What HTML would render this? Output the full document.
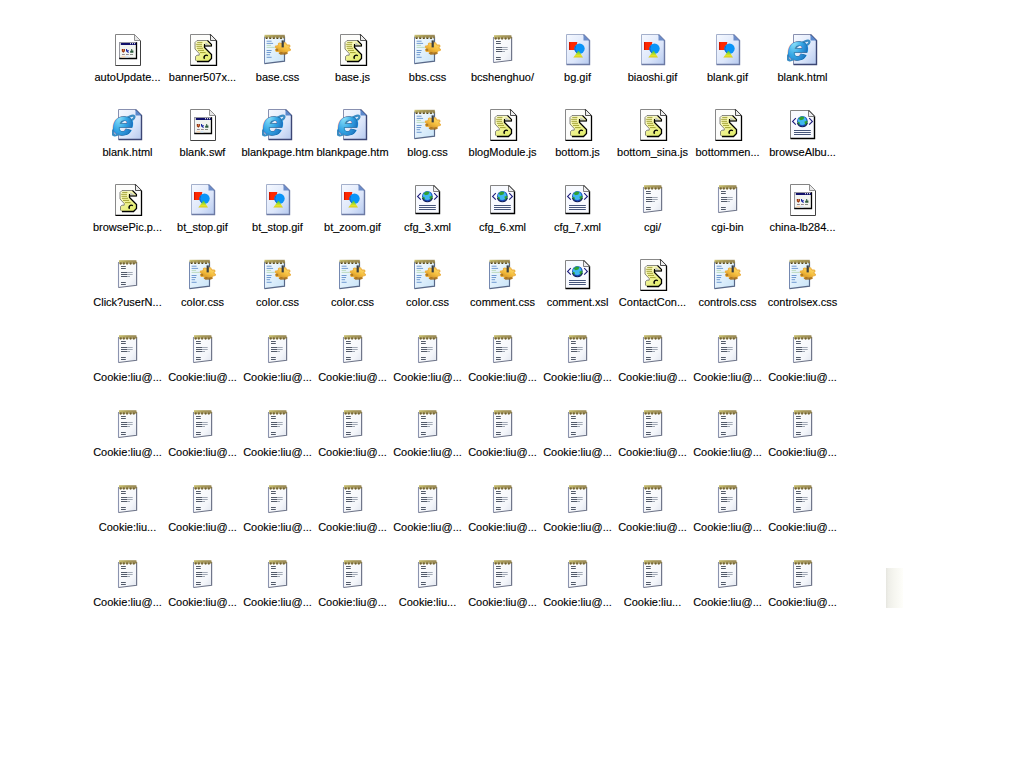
<!DOCTYPE html>
<html><head><meta charset="utf-8"><style>
html,body{margin:0;padding:0;background:#fff;width:1024px;height:768px;overflow:hidden;position:relative}
.i{position:absolute;width:32px;height:32px;overflow:visible}
.t{position:absolute;width:75px;text-align:center;font:11px/13px "Liberation Sans",sans-serif;color:#000;white-space:nowrap;-webkit-text-stroke:0.12px #000}
.sel{position:absolute;left:886px;top:568px;width:17px;height:40px;background:linear-gradient(to right,#e6e6e0,#efefe9 15%,#f6f6f0 50%,#fefefa)}
</style></head><body>
<svg width="0" height="0" style="position:absolute"><defs>
<linearGradient id="gBlue" x1="0" y1="0" x2="1" y2="1"><stop offset="0" stop-color="#f6f9ff"/><stop offset="0.6" stop-color="#dce6fa"/><stop offset="1" stop-color="#b4c8ee"/></linearGradient>
<linearGradient id="gNote" x1="0" y1="0" x2="1" y2="1"><stop offset="0" stop-color="#ffffff"/><stop offset="0.7" stop-color="#f4f6fa"/><stop offset="1" stop-color="#dfe4ee"/></linearGradient>
<linearGradient id="gCss" x1="0" y1="0" x2="1" y2="1"><stop offset="0" stop-color="#f8fcff"/><stop offset="1" stop-color="#c8e4f8"/></linearGradient>
<radialGradient id="gE" cx="0.3" cy="0.3" r="0.8"><stop offset="0" stop-color="#9aeafc"/><stop offset="0.5" stop-color="#36a8e6"/><stop offset="1" stop-color="#1666b8"/></radialGradient>
<linearGradient id="gGear" x1="0.8" y1="0" x2="0.2" y2="1"><stop offset="0" stop-color="#ffe070"/><stop offset="0.5" stop-color="#f4bc3c"/><stop offset="1" stop-color="#c88a24"/></linearGradient>
<linearGradient id="gTri" x1="0" y1="0" x2="0" y2="1"><stop offset="0" stop-color="#30c83c"/><stop offset="0.7" stop-color="#e4e428"/><stop offset="1" stop-color="#d8c820"/></linearGradient>
<linearGradient id="gScroll" x1="0" y1="0" x2="0.6" y2="1"><stop offset="0" stop-color="#fdfde0"/><stop offset="0.5" stop-color="#f4f4a0"/><stop offset="1" stop-color="#e4ee70"/></linearGradient>
<linearGradient id="gBind2" x1="0" y1="0" x2="1" y2="0"><stop offset="0" stop-color="#c8c070"/><stop offset="0.5" stop-color="#a89a58"/><stop offset="1" stop-color="#9c8c5c"/></linearGradient>
<linearGradient id="gBind" x1="0" y1="0" x2="0" y2="1"><stop offset="0" stop-color="#8a7840"/><stop offset="0.5" stop-color="#c8b468"/><stop offset="1" stop-color="#e8dcb0"/></linearGradient>

<symbol id="app" viewBox="0 0 32 32">
 <path d="M3.5,0.5H22.5L28.5,6.5V31.5H3.5Z" fill="#fff"/>
 <path d="M3.5,31.5V0.5H22.5" fill="none" stroke="#848484"/>
 <path d="M22.5,0.5L28.5,6.5V31.5H3.5" fill="none" stroke="#404040"/>
 <path d="M22.5,0.5V6.5H28.5Z" fill="#e8e8e8" stroke="#909090"/>
 <rect x="7.5" y="8.5" width="17" height="16" fill="#f2f4f0" stroke="#9898a0"/>
 <path d="M24.5,8.3V24.5H7.3" fill="none" stroke="#000" stroke-width="1.3"/>
 <rect x="8.8" y="9" width="15.4" height="2" fill="#10106a"/>
 <rect x="18" y="9.2" width="1" height="1" fill="#fff"/><rect x="20" y="9.2" width="1" height="1" fill="#fff"/><rect x="22" y="9.2" width="1" height="1" fill="#fff"/>
 <rect x="9.5" y="22" width="4" height="1.5" fill="#fcd8b4"/><rect x="13.5" y="22" width="3" height="1.5" fill="#d4e6f8"/>
 <path d="M9.8,15.1h1.3l0.5,0.6l0.5,-0.6h0.8v2.1l-1.6,1.6l-1.5,-1.6z" fill="#922c0e"/>
 <circle cx="11.3" cy="16.6" r="0.6" fill="#f0a040"/>
 <path d="M14,15h1.1v1.2h1.8v1h-1l1.2,1.5h-1.3l-1.3,-1.3h-0.5z" fill="#1a28a0"/>
 <path d="M19.2,15h1v1.5h1.2v2.3h-3.2v-2.1h1z" fill="#2c5a3c"/>
 <rect x="10" y="20" width="2.8" height="0.9" fill="#8a7a80"/><rect x="14" y="20" width="2.8" height="0.9" fill="#8a7a80"/><rect x="18" y="20" width="3" height="0.9" fill="#7a8078"/>
</symbol>

<symbol id="js" viewBox="0 0 32 32">
 <path d="M3.5,0.5H23L29.5,7V31.5H3.5Z" fill="#fdfdfb"/>
 <path d="M3.5,31.5V0.5H23" fill="none" stroke="#888"/>
 <path d="M23,0.5L29.5,7V31.5H3.5" fill="none" stroke="#000" stroke-width="1.3"/>
 <path d="M23.5,0.5V6.5H29.5Z" fill="#ececec" stroke="#404040" stroke-width="0.9"/>
 <path d="M10,6.5H20.5L24.5,10.5V12H17.5V13.5L24.5,20.5V24.5L21.5,27.5H10L8.5,26V22.5L10,21.2H12.2V19.5L8,15V8.5Z" fill="url(#gScroll)" stroke="#585858" stroke-width="0.7"/>
 <path d="M18.3,8.2L23.2,11.2H18.3Z" fill="#c4c8c4"/>
 <path d="M17.5,11.5V13.5L24.5,20.5V24.5L21.5,27.5H10" fill="none" stroke="#000" stroke-width="1.3"/>
 <path d="M20.5,6.5L24.5,10.5V12H17.5V10" fill="none" stroke="#000" stroke-width="1.1"/>
 <path d="M17.6,24.8a2.2,2.2 0 0 1 3.2,-3" fill="none" stroke="#000" stroke-width="1.4"/>
 <g stroke="#9a9a28" stroke-width="0.9">
  <path d="M10.2,8.4h5.2M9.2,10.3h5.8M9.5,12.3h5.5M10,14.3h6M11,16.4h6M13,18.6h5.6"/>
 </g>
</symbol>

<symbol id="css" viewBox="0 0 32 32">
 <path d="M2.5,2.5H22.5V27.2L2.5,29.6Z" fill="url(#gCss)"/>
 <path d="M2.5,29.6V2.5" fill="none" stroke="#7488b0" stroke-width="1"/>
 <path d="M22.5,2.5V27.2L2.5,29.6" fill="none" stroke="#586888" stroke-width="1.2"/>
 <path d="M2.5,0.8H22.8V3.4H2.5Z" fill="url(#gBind2)"/>
 <g fill="#8c7c44"><ellipse cx="4.6" cy="3.8" rx="1.4" ry="1.3"/><ellipse cx="8.2" cy="3.8" rx="1.4" ry="1.3"/><ellipse cx="11.8" cy="3.8" rx="1.4" ry="1.3"/><ellipse cx="15.4" cy="3.8" rx="1.4" ry="1.3"/><ellipse cx="19" cy="3.8" rx="1.4" ry="1.3"/><ellipse cx="22" cy="3.4" rx="0.9" ry="1.2"/></g>
 <g fill="#4c4020"><rect x="4" y="4" width="1.2" height="1"/><rect x="7.6" y="4" width="1.2" height="1"/><rect x="11.2" y="4" width="1.2" height="1"/><rect x="14.8" y="4" width="1.2" height="1"/><rect x="18.4" y="4" width="1.2" height="1"/></g>
 <g stroke="#6290cc" stroke-width="0.9"><path d="M4.6,7.2h5M4.6,9.4h6.5M4.6,16.5h5M4.6,18.5h4.5M4.6,20.7h3.5M4.6,23.3h5"/></g>
 <g stroke="#b0d4b0" stroke-width="0.8"><path d="M4.6,11.4h4.5M4.6,13.4h8"/></g>
 <path d="M28.44,15.43L28.00,16.50L25.98,16.85L25.20,17.54L25.11,19.05L23.76,19.57L22.00,18.78L20.78,18.86L19.25,19.89L17.79,19.56L17.31,18.08L16.37,17.51L14.30,17.45L13.58,16.46L14.68,15.17L14.56,14.28L13.16,13.17L13.60,12.10L15.62,11.75L16.40,11.06L16.49,9.55L17.84,9.03L19.60,9.82L20.82,9.74L22.35,8.71L23.81,9.04L24.29,10.52L25.23,11.09L27.30,11.15L28.02,12.14L26.92,13.43L27.04,14.32Z" fill="url(#gGear)" stroke="#ecb040" stroke-width="1.1" stroke-linejoin="round"/>
 <path d="M13,15.2l2.2,-0.8l1.2,1.6l-1.4,1.2z M16.5,19.2l2.5,-1.2l3,0.6l2.5,-0.6l1.5,1.4l-2.5,1.4h-5z" fill="#9a6418" opacity="0.75"/>
 <rect x="19.6" y="6.4" width="2.2" height="7" fill="#3c4040"/>
</symbol>

<symbol id="txt" viewBox="0 0 32 32">
 <path d="M6.5,3H24.6V26.3L6.5,28.5Z" fill="url(#gNote)"/>
 <path d="M6.5,28.5V3" fill="none" stroke="#8c94b0" stroke-width="1.1"/>
 <path d="M24.6,3V26.3L6.5,28.5" fill="none" stroke="#70768a" stroke-width="1.2"/>
 <path d="M7,1.2H24.4V3.8H7Z" fill="url(#gBind2)"/>
 <g fill="#8c7c44"><ellipse cx="8.7" cy="4.2" rx="1.3" ry="1.3"/><ellipse cx="11.8" cy="4.2" rx="1.3" ry="1.3"/><ellipse cx="15.1" cy="4.2" rx="1.3" ry="1.3"/><ellipse cx="18.6" cy="4.2" rx="1.3" ry="1.3"/><ellipse cx="21.8" cy="4.2" rx="1.3" ry="1.3"/><ellipse cx="24" cy="3.6" rx="0.8" ry="1.2"/></g>
 <g fill="#5a4c28"><rect x="8.2" y="4.4" width="1" height="1"/><rect x="11.3" y="4.4" width="1" height="1"/><rect x="14.6" y="4.4" width="1" height="1"/><rect x="18.1" y="4.4" width="1" height="1"/><rect x="21.3" y="4.4" width="1" height="1"/></g>
 <g stroke="#4a5262" stroke-width="0.95"><path d="M9,7.5h4.8M9,9.5h4.8M9,13.5h6M9,15.5h6M9,17.5h6M9,23.5h4.8M9,25.5h4.8"/></g>
 <g stroke="#98a0ae" stroke-width="0.9"><path d="M15,13.5h5.7M15,15.5h5.7M15,17.5h3"/></g>
</symbol>

<symbol id="gif" viewBox="0 0 32 32">
 <path d="M4.5,0.5H21.5L27.5,6.5V30.5H4.5Z" fill="url(#gBlue)"/>
 <path d="M4.5,30.5V0.5H21.5" fill="none" stroke="#a4b0cc"/>
 <path d="M21.5,0.5L27.5,6.5V30.5H4.5" fill="none" stroke="#6c7aa4" stroke-width="1.4"/>
 <path d="M21.5,0.5V6.5H27.5Z" fill="#6c8cc8"/>
 <path d="M7,8H15.3L14,16H7Z" fill="#ff2800"/>
 <path d="M7,8h1.2v8H7z" fill="#d01800"/>
 <circle cx="17.5" cy="14.6" r="5.2" fill="#0a94f8"/>
 <path d="M13.6,12.2a5.2,5.2 0 0 0 3,7.5" fill="none" stroke="#1860c8" stroke-width="1"/>
 <path d="M16.6,16.6L21,23.5H11.3Z" fill="url(#gTri)"/>
</symbol>

<symbol id="ie" viewBox="0 0 32 32">
 <path d="M6.5,0.5H23.5L29.5,6.5V30.5H6.5Z" fill="url(#gBlue)"/>
 <path d="M6.5,30.5V0.5H23.5" fill="none" stroke="#8890b0"/>
 <path d="M23.5,0.5L29.5,6.5V30.5H6.5" fill="none" stroke="#3c4674" stroke-width="1.4"/>
 <path d="M23.5,0.5V6.5H29.5Z" fill="#5a88cc"/>
 <path d="M2.5,24.5C-1.5,28 -0.5,20 9,13C16,8 21,5.5 22.2,7.2C23,8.5 21.5,10 20,11" fill="none" stroke="#3a8cc4" stroke-width="2.2"/>
 <text transform="scale(1.12 1)" x="0.4" y="25.8" font-family="Liberation Sans" font-weight="bold" font-style="italic" font-size="33" fill="url(#gE)" stroke="#1e5a8c" stroke-width="1.3">e</text>
 <text transform="scale(1.12 1)" x="0.4" y="25.8" font-family="Liberation Sans" font-weight="bold" font-style="italic" font-size="33" fill="url(#gE)" stroke="url(#gE)" stroke-width="0.5">e</text>
 <path d="M1.5,23C0,26.5 2.5,27.5 7,25.2" fill="none" stroke="#3a8cc4" stroke-width="2"/>
</symbol>

<symbol id="xml" viewBox="0 0 32 32">
 <path d="M3.5,1.5H21.5L27.5,7.5V29.5H3.5Z" fill="#f8faff"/>
 <path d="M3.5,29.5V1.5H21.5" fill="none" stroke="#848484"/>
 <path d="M21.5,1.5L27.5,7.5V29.5H3.5" fill="none" stroke="#000" stroke-width="1.4"/>
 <path d="M21.5,1.5V7.5H27.5Z" fill="#ececee" stroke="#606060" stroke-width="0.8"/>
 <path d="M8.8,9.2L5.6,12.4L8.8,15.6M22.2,9.2L25.4,12.4L22.2,15.6" fill="none" stroke="#1a1a7a" stroke-width="1.1"/>
 <circle cx="15.4" cy="12.2" r="5.3" fill="#1c50c0"/>
 <circle cx="15.2" cy="11.8" r="4.3" fill="#40b8f0"/>
 <path d="M11.5,9.8l2.5,-2.2l3.4,0.4l-1,2.6l-2.8,0.6z M17.4,12.8l2.8,-1.4l0.4,3.2l-2.2,1.8z M10.8,12.6l2.2,1.2l-0.6,2.2l-1.8,-1.2z" fill="#30a030"/>
 <path d="M10.5,14a5.1,5.1 0 0 0 9.8,0" fill="none" stroke="#102060" stroke-width="1.1"/>
 <g stroke="#45557a" stroke-width="1"><path d="M7,21.5h16.8M7,23.5h16.8M7,25.5h16.8"/></g>
</symbol>
</defs>
</svg>
<svg class="i" style="left:112px;top:34px"><use href="#app"/></svg><div class="t" style="left:90px;top:71px">autoUpdate...</div><svg class="i" style="left:187px;top:34px"><use href="#js"/></svg><div class="t" style="left:165px;top:71px">banner507x...</div><svg class="i" style="left:262px;top:34px"><use href="#css"/></svg><div class="t" style="left:240px;top:71px">base.css</div><svg class="i" style="left:337px;top:34px"><use href="#js"/></svg><div class="t" style="left:315px;top:71px">base.js</div><svg class="i" style="left:412px;top:34px"><use href="#css"/></svg><div class="t" style="left:390px;top:71px">bbs.css</div><svg class="i" style="left:487px;top:34px"><use href="#txt"/></svg><div class="t" style="left:465px;top:71px">bcshenghuo/</div><svg class="i" style="left:562px;top:34px"><use href="#gif"/></svg><div class="t" style="left:540px;top:71px">bg.gif</div><svg class="i" style="left:637px;top:34px"><use href="#gif"/></svg><div class="t" style="left:615px;top:71px">biaoshi.gif</div><svg class="i" style="left:712px;top:34px"><use href="#gif"/></svg><div class="t" style="left:690px;top:71px">blank.gif</div><svg class="i" style="left:787px;top:34px"><use href="#ie"/></svg><div class="t" style="left:765px;top:71px">blank.html</div><svg class="i" style="left:112px;top:109px"><use href="#ie"/></svg><div class="t" style="left:90px;top:146px">blank.html</div><svg class="i" style="left:187px;top:109px"><use href="#app"/></svg><div class="t" style="left:165px;top:146px">blank.swf</div><svg class="i" style="left:262px;top:109px"><use href="#ie"/></svg><div class="t" style="left:240px;top:146px">blankpage.htm</div><svg class="i" style="left:337px;top:109px"><use href="#ie"/></svg><div class="t" style="left:315px;top:146px">blankpage.htm</div><svg class="i" style="left:412px;top:109px"><use href="#css"/></svg><div class="t" style="left:390px;top:146px">blog.css</div><svg class="i" style="left:487px;top:109px"><use href="#js"/></svg><div class="t" style="left:465px;top:146px">blogModule.js</div><svg class="i" style="left:562px;top:109px"><use href="#js"/></svg><div class="t" style="left:540px;top:146px">bottom.js</div><svg class="i" style="left:637px;top:109px"><use href="#js"/></svg><div class="t" style="left:615px;top:146px">bottom_sina.js</div><svg class="i" style="left:712px;top:109px"><use href="#js"/></svg><div class="t" style="left:690px;top:146px">bottommen...</div><svg class="i" style="left:787px;top:109px"><use href="#xml"/></svg><div class="t" style="left:765px;top:146px">browseAlbu...</div><svg class="i" style="left:112px;top:184px"><use href="#js"/></svg><div class="t" style="left:90px;top:221px">browsePic.p...</div><svg class="i" style="left:187px;top:184px"><use href="#gif"/></svg><div class="t" style="left:165px;top:221px">bt_stop.gif</div><svg class="i" style="left:262px;top:184px"><use href="#gif"/></svg><div class="t" style="left:240px;top:221px">bt_stop.gif</div><svg class="i" style="left:337px;top:184px"><use href="#gif"/></svg><div class="t" style="left:315px;top:221px">bt_zoom.gif</div><svg class="i" style="left:412px;top:184px"><use href="#xml"/></svg><div class="t" style="left:390px;top:221px">cfg_3.xml</div><svg class="i" style="left:487px;top:184px"><use href="#xml"/></svg><div class="t" style="left:465px;top:221px">cfg_6.xml</div><svg class="i" style="left:562px;top:184px"><use href="#xml"/></svg><div class="t" style="left:540px;top:221px">cfg_7.xml</div><svg class="i" style="left:637px;top:184px"><use href="#txt"/></svg><div class="t" style="left:615px;top:221px">cgi/</div><svg class="i" style="left:712px;top:184px"><use href="#txt"/></svg><div class="t" style="left:690px;top:221px">cgi-bin</div><svg class="i" style="left:787px;top:184px"><use href="#app"/></svg><div class="t" style="left:765px;top:221px">china-lb284...</div><svg class="i" style="left:112px;top:259px"><use href="#txt"/></svg><div class="t" style="left:90px;top:296px">Click?userN...</div><svg class="i" style="left:187px;top:259px"><use href="#css"/></svg><div class="t" style="left:165px;top:296px">color.css</div><svg class="i" style="left:262px;top:259px"><use href="#css"/></svg><div class="t" style="left:240px;top:296px">color.css</div><svg class="i" style="left:337px;top:259px"><use href="#css"/></svg><div class="t" style="left:315px;top:296px">color.css</div><svg class="i" style="left:412px;top:259px"><use href="#css"/></svg><div class="t" style="left:390px;top:296px">color.css</div><svg class="i" style="left:487px;top:259px"><use href="#css"/></svg><div class="t" style="left:465px;top:296px">comment.css</div><svg class="i" style="left:562px;top:259px"><use href="#xml"/></svg><div class="t" style="left:540px;top:296px">comment.xsl</div><svg class="i" style="left:637px;top:259px"><use href="#js"/></svg><div class="t" style="left:615px;top:296px">ContactCon...</div><svg class="i" style="left:712px;top:259px"><use href="#css"/></svg><div class="t" style="left:690px;top:296px">controls.css</div><svg class="i" style="left:787px;top:259px"><use href="#css"/></svg><div class="t" style="left:765px;top:296px">controlsex.css</div><svg class="i" style="left:112px;top:334px"><use href="#txt"/></svg><div class="t" style="left:90px;top:371px">Cookie:liu@...</div><svg class="i" style="left:187px;top:334px"><use href="#txt"/></svg><div class="t" style="left:165px;top:371px">Cookie:liu@...</div><svg class="i" style="left:262px;top:334px"><use href="#txt"/></svg><div class="t" style="left:240px;top:371px">Cookie:liu@...</div><svg class="i" style="left:337px;top:334px"><use href="#txt"/></svg><div class="t" style="left:315px;top:371px">Cookie:liu@...</div><svg class="i" style="left:412px;top:334px"><use href="#txt"/></svg><div class="t" style="left:390px;top:371px">Cookie:liu@...</div><svg class="i" style="left:487px;top:334px"><use href="#txt"/></svg><div class="t" style="left:465px;top:371px">Cookie:liu@...</div><svg class="i" style="left:562px;top:334px"><use href="#txt"/></svg><div class="t" style="left:540px;top:371px">Cookie:liu@...</div><svg class="i" style="left:637px;top:334px"><use href="#txt"/></svg><div class="t" style="left:615px;top:371px">Cookie:liu@...</div><svg class="i" style="left:712px;top:334px"><use href="#txt"/></svg><div class="t" style="left:690px;top:371px">Cookie:liu@...</div><svg class="i" style="left:787px;top:334px"><use href="#txt"/></svg><div class="t" style="left:765px;top:371px">Cookie:liu@...</div><svg class="i" style="left:112px;top:409px"><use href="#txt"/></svg><div class="t" style="left:90px;top:446px">Cookie:liu@...</div><svg class="i" style="left:187px;top:409px"><use href="#txt"/></svg><div class="t" style="left:165px;top:446px">Cookie:liu@...</div><svg class="i" style="left:262px;top:409px"><use href="#txt"/></svg><div class="t" style="left:240px;top:446px">Cookie:liu@...</div><svg class="i" style="left:337px;top:409px"><use href="#txt"/></svg><div class="t" style="left:315px;top:446px">Cookie:liu@...</div><svg class="i" style="left:412px;top:409px"><use href="#txt"/></svg><div class="t" style="left:390px;top:446px">Cookie:liu@...</div><svg class="i" style="left:487px;top:409px"><use href="#txt"/></svg><div class="t" style="left:465px;top:446px">Cookie:liu@...</div><svg class="i" style="left:562px;top:409px"><use href="#txt"/></svg><div class="t" style="left:540px;top:446px">Cookie:liu@...</div><svg class="i" style="left:637px;top:409px"><use href="#txt"/></svg><div class="t" style="left:615px;top:446px">Cookie:liu@...</div><svg class="i" style="left:712px;top:409px"><use href="#txt"/></svg><div class="t" style="left:690px;top:446px">Cookie:liu@...</div><svg class="i" style="left:787px;top:409px"><use href="#txt"/></svg><div class="t" style="left:765px;top:446px">Cookie:liu@...</div><svg class="i" style="left:112px;top:484px"><use href="#txt"/></svg><div class="t" style="left:90px;top:521px">Cookie:liu...</div><svg class="i" style="left:187px;top:484px"><use href="#txt"/></svg><div class="t" style="left:165px;top:521px">Cookie:liu@...</div><svg class="i" style="left:262px;top:484px"><use href="#txt"/></svg><div class="t" style="left:240px;top:521px">Cookie:liu@...</div><svg class="i" style="left:337px;top:484px"><use href="#txt"/></svg><div class="t" style="left:315px;top:521px">Cookie:liu@...</div><svg class="i" style="left:412px;top:484px"><use href="#txt"/></svg><div class="t" style="left:390px;top:521px">Cookie:liu@...</div><svg class="i" style="left:487px;top:484px"><use href="#txt"/></svg><div class="t" style="left:465px;top:521px">Cookie:liu@...</div><svg class="i" style="left:562px;top:484px"><use href="#txt"/></svg><div class="t" style="left:540px;top:521px">Cookie:liu@...</div><svg class="i" style="left:637px;top:484px"><use href="#txt"/></svg><div class="t" style="left:615px;top:521px">Cookie:liu@...</div><svg class="i" style="left:712px;top:484px"><use href="#txt"/></svg><div class="t" style="left:690px;top:521px">Cookie:liu@...</div><svg class="i" style="left:787px;top:484px"><use href="#txt"/></svg><div class="t" style="left:765px;top:521px">Cookie:liu@...</div><svg class="i" style="left:112px;top:559px"><use href="#txt"/></svg><div class="t" style="left:90px;top:596px">Cookie:liu@...</div><svg class="i" style="left:187px;top:559px"><use href="#txt"/></svg><div class="t" style="left:165px;top:596px">Cookie:liu@...</div><svg class="i" style="left:262px;top:559px"><use href="#txt"/></svg><div class="t" style="left:240px;top:596px">Cookie:liu@...</div><svg class="i" style="left:337px;top:559px"><use href="#txt"/></svg><div class="t" style="left:315px;top:596px">Cookie:liu@...</div><svg class="i" style="left:412px;top:559px"><use href="#txt"/></svg><div class="t" style="left:390px;top:596px">Cookie:liu...</div><svg class="i" style="left:487px;top:559px"><use href="#txt"/></svg><div class="t" style="left:465px;top:596px">Cookie:liu@...</div><svg class="i" style="left:562px;top:559px"><use href="#txt"/></svg><div class="t" style="left:540px;top:596px">Cookie:liu@...</div><svg class="i" style="left:637px;top:559px"><use href="#txt"/></svg><div class="t" style="left:615px;top:596px">Cookie:liu...</div><svg class="i" style="left:712px;top:559px"><use href="#txt"/></svg><div class="t" style="left:690px;top:596px">Cookie:liu@...</div><svg class="i" style="left:787px;top:559px"><use href="#txt"/></svg><div class="t" style="left:765px;top:596px">Cookie:liu@...</div>
<div class="sel"></div>
</body></html>
